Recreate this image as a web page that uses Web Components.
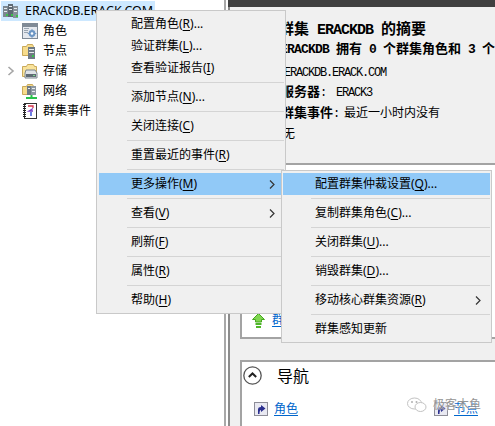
<!DOCTYPE html>
<html>
<head>
<meta charset="utf-8">
<title>群集</title>
<style>
  html, body { margin: 0; padding: 0; background: #fff; }
  body { font-family: "Noto Sans", "Noto Sans CJK SC", sans-serif; font-size: 12px; color: #000; }
  u { text-underline-offset: 2px; }
</style>
</head>
<body>

<cluster-app>
  <cluster-tree slot="tree">
    <tree-row root icon="cluster">ERACKDB.ERACK.COM</tree-row>
    <tree-row icon="roles">角色</tree-row>
    <tree-row icon="nodes">节点</tree-row>
    <tree-row icon="storage" expander>存储</tree-row>
    <tree-row icon="network">网络</tree-row>
    <tree-row icon="events">群集事件</tree-row>
  </cluster-tree>

  <cluster-summary slot="summary"></cluster-summary>

  <info-card slot="card">
    <link-row icon="up">群</link-row>
  </info-card>

  <nav-card slot="nav">
    <link-row icon="shortcut">角色</link-row>
    <link-row icon="shortcut">节点</link-row>
  </nav-card>

  <water-mark slot="over"></water-mark>

  <pop-menu slot="over" style="left:96px;top:10px;width:185px">
    <menu-item>配置角色(<u>R</u>)...</menu-item>
    <menu-item>验证群集(<u>L</u>)...</menu-item>
    <menu-item>查看验证报告(<u>I</u>)</menu-item>
    <menu-sep></menu-sep>
    <menu-item>添加节点(<u>N</u>)...</menu-item>
    <menu-sep></menu-sep>
    <menu-item>关闭连接(<u>C</u>)</menu-item>
    <menu-sep></menu-sep>
    <menu-item>重置最近的事件(<u>R</u>)</menu-item>
    <menu-sep></menu-sep>
    <menu-item hot arrow>更多操作(<u>M</u>)</menu-item>
    <menu-sep></menu-sep>
    <menu-item arrow>查看(<u>V</u>)</menu-item>
    <menu-sep></menu-sep>
    <menu-item>刷新(<u>F</u>)</menu-item>
    <menu-sep></menu-sep>
    <menu-item>属性(<u>R</u>)</menu-item>
    <menu-sep></menu-sep>
    <menu-item>帮助(<u>H</u>)</menu-item>
  </pop-menu>

  <pop-menu slot="over" class="sub" style="left:281px;top:170px;width:207px;padding-left:1px">
    <menu-item hot>配置群集仲裁设置(<u>Q</u>)...</menu-item>
    <menu-sep></menu-sep>
    <menu-item>复制群集角色(<u>C</u>)...</menu-item>
    <menu-sep></menu-sep>
    <menu-item>关闭群集(<u>U</u>)...</menu-item>
    <menu-sep></menu-sep>
    <menu-item>销毁群集(<u>D</u>)...</menu-item>
    <menu-sep></menu-sep>
    <menu-item arrow>移动核心群集资源(<u>R</u>)</menu-item>
    <menu-sep></menu-sep>
    <menu-item>群集感知更新</menu-item>
  </pop-menu>
</cluster-app>

<script>
const ICONS = {
  cluster: `
    <rect x="0" y="3" width="5" height="11" fill="#7d8790"/><rect x="1" y="5" width="3" height="1" fill="#e8ecef"/><rect x="1" y="8" width="3" height="1" fill="#e8ecef"/>
    <rect x="5" y="1" width="5" height="13" fill="#5f6a74"/><rect x="6" y="3" width="3" height="1" fill="#e8ecef"/><rect x="6" y="6" width="3" height="1" fill="#e8ecef"/>
    <rect x="10" y="3" width="5" height="12" fill="#87919a"/><rect x="11" y="5" width="3" height="1" fill="#e8ecef"/><rect x="11" y="8" width="3" height="1" fill="#e8ecef"/>
    <rect x="3" y="11" width="2" height="2" fill="#39c24a"/><rect x="8" y="11" width="2" height="2" fill="#39c24a"/><rect x="13" y="12" width="2" height="2" fill="#39c24a"/>`,
  roles: `
    <rect x="0.5" y="0.5" width="15" height="15" fill="#e4e8ee" stroke="#7f8a96"/>
    <rect x="1" y="1" width="14" height="3" fill="#7f8a96"/>
    <rect x="2" y="5" width="5" height="1" fill="#9aa5b1"/><rect x="2" y="7" width="4" height="1" fill="#9aa5b1"/><rect x="2" y="9" width="4" height="1" fill="#9aa5b1"/>
    <circle cx="10" cy="10.5" r="3.4" fill="#6d96c4"/><circle cx="10" cy="10.5" r="1.3" fill="#fff"/>
    <path d="M10 6.2v1.4M10 13.4v1.4M5.700 10.5h1.4M12.900 10.5h1.4" stroke="#6d96c4" stroke-width="1.2"/>`,
  nodes: `
    <path d="M0.500 3.500h4l1-2h5l1 2v9h-11z" fill="#f7dc8c" stroke="#c9a95a"/>
    <rect x="6" y="4" width="7" height="12" fill="#6f7a84"/>
    <rect x="7" y="6" width="5" height="1" fill="#e8ecef"/><rect x="7" y="9" width="5" height="1" fill="#e8ecef"/>
    <rect x="10" y="12" width="2" height="2" fill="#39c24a"/>`,
  storage: `
    <path d="M0.500 3.500h4l1-2h6l1 2h2v10h-14z" fill="#f9e39b" stroke="#c9a95a"/>
    <path d="M4 7h9l2 3v5h-12v-5z" fill="#dfe3e7" stroke="#7c868f"/>
    <rect x="4" y="11" width="10" height="3" fill="#5f6a74"/><rect x="11" y="12" width="2" height="1" fill="#7bd88a"/>`,
  network: `
    <path d="M0.500 3.500h4l1-2h5l1 2v8h-11z" fill="#f7dc8c" stroke="#c9a95a"/>
    <rect x="5" y="3" width="4" height="9" fill="#6f7a84"/><rect x="9" y="3" width="5" height="9" fill="#8d98a2"/>
    <rect x="6" y="5" width="2" height="1" fill="#e8ecef"/><rect x="10" y="5" width="3" height="1" fill="#e8ecef"/><rect x="10" y="8" width="3" height="1" fill="#e8ecef"/>
    <path d="M9.500 12v2M4 15h11" stroke="#28c24a" stroke-width="2"/>`,
  events: `
    <rect x="2.500" y="0.500" width="12" height="15" fill="#fff" stroke="#333"/>
    <path d="M1 1.500h3M1 3.500h3M1 5.500h3M1 7.500h3M1 9.500h3M1 11.500h3M1 13.500h3" stroke="#222"/>
    <path d="M6 3h5v2" fill="none" stroke="#d8344a" stroke-width="1.3"/>
    <path d="M11 5.500L7 8h4" fill="none" stroke="#7a3fc4" stroke-width="1.3"/>
    <path d="M9 9v4" stroke="#3a55d8" stroke-width="1.5"/>`,
  up: `
    <path d="M7.500 0.500L13.500 6.500H10.500V9H4.500V6.500H1.500z" fill="#7fd650" stroke="#46a81f"/>
    <rect x="4.500" y="10" width="6" height="2" fill="#4fb62a"/><rect x="5" y="13" width="5" height="2" fill="#4fb62a"/>`,
  shortcut: `
    <rect x="0.500" y="0.500" width="13" height="13" fill="#e9e9f2" stroke="#8d8d98"/>
    <path d="M4 12V7.500C4 5.800 5.200 5 7 5V3l4.500 3.500L7 10V8C6 8 5.500 9.500 5.500 12z" fill="#2b2f8f"/>`
};

const appTemplate = document.createElement("template");
appTemplate.innerHTML = `
  <style>
    :host { display: block; position: relative; width: 495px; height: 426px; overflow: hidden; background: #fff; }
    .split { display: flex; height: 100%; }
    .left { width: 224px; flex: none; border-right: 2px solid #a8a8a8; margin-right: 2px; }
    .right { flex: 1; min-width: 0; display: flex; flex-direction: column; background: #f0f0f0; border-left: 2px solid #8c8c8c; }
    .bar { height: 7px; flex: none; background: #404040; margin-left: -2px; }
    .stack { display: flex; flex-direction: column; flex: 1; min-height: 0; }
  </style>
  <div class="split">
    <div class="left"><slot name="tree"></slot></div>
    <div class="right">
      <div class="bar"></div>
      <div class="stack">
        <slot name="summary"></slot>
        <slot name="card"></slot>
        <slot name="nav"></slot>
      </div>
    </div>
  </div>
  <slot name="over"></slot>
`;
class ClusterApp extends HTMLElement {
  constructor() {
    super();
    this.attachShadow( {mode:"open"} );
    this.shadowRoot.appendChild( appTemplate.content.cloneNode(true) );
  }
}

const treeTemplate = document.createElement("template");
treeTemplate.innerHTML = `
  <style>
    :host { display: flex; flex-direction: column; align-items: flex-start; padding-top: 1px; }
  </style>
  <slot></slot>
`;
class ClusterTree extends HTMLElement {
  constructor() {
    super();
    this.attachShadow( {mode:"open"} );
    this.shadowRoot.appendChild( treeTemplate.content.cloneNode(true) );
  }
}

const iconSvg = (name, size=16) =>
  `<svg width="${size}" height="${size}" viewBox="0 0 ${size} ${size}" style="display:block;flex:none">${ICONS[name]}</svg>`;

const rowTemplate = document.createElement("template");
rowTemplate.innerHTML = `
  <style>
    :host { display: flex; align-items: center; height: 20px; padding-left: 22px; line-height: 20px; white-space: nowrap; position: relative; }
    :host([root]) { padding-left: 2px; margin-left: 1px; background: #cde8ff; width: 152px; font-size: 12.500px; }
    #icon { margin-right: 5px; }
    :host([root]) #icon { margin-right: 6px; }
    #chev { display: none; position: absolute; left: 7px; top: 5px; }
    :host([expander]) #chev { display: block; }
  </style>
  <svg id="chev" width="8" height="10" viewBox="0 0 8 10"><path d="M1.500 1L6 5 1.500 9" fill="none" stroke="#a6a6a6" stroke-width="1.600"/></svg>
  <span id="icon"></span><slot></slot>
`;
class TreeRow extends HTMLElement {
  constructor() {
    super();
    this.attachShadow( {mode:"open"} );
    this.shadowRoot.appendChild( rowTemplate.content.cloneNode(true) );
    this.shadowRoot.querySelector("#icon").innerHTML = iconSvg( this.getAttribute("icon") );
  }
}

const summaryTemplate = document.createElement("template");
summaryTemplate.innerHTML = `
  <style>
    :host { display: block; height: 156px; flex: none; box-sizing: border-box; padding: 11px 0 0 50px; overflow: hidden; font-family: "Noto Sans CJK SC", sans-serif; }
    div { height: 20px; line-height: 20px; white-space: pre; }
    .m { font-family: "Liberation Mono", monospace; }
    .h { font-size: 15px; font-weight: 700; margin-left: -1px; }
    .h .m { font-size: 15px; letter-spacing: -1px; }
    .b { font-size: 13px; font-weight: 700; }
    .b .m { font-size: 13px; letter-spacing: -0.8px; }
    .t { font-size: 12px; }
    .t .m { letter-spacing: -1.2px; font-weight: 400; }
    .k { font-size: 13px; font-weight: 700; }
    .sp { margin-top: 3px; margin-left: 4px; }
    .r4 { margin-left: 1px; }
    .r5 { margin-top: 1px; margin-left: 1px; }
    .r6 { margin-top: 1px; margin-left: 3px; }
    .pad { margin-left: 4px; }
    .pad5 { margin-left: 5px; }
  </style>
  <div class="h">群集<span class="m"> ERACKDB </span>的摘要</div>
  <div class="b"><span class="m">ERACKDB </span>拥有<span class="m"> 0 </span>个群集角色和<span class="m"> 3 </span>个</div>
  <div class="t sp"><span class="m">ERACKDB.ERACK.COM</span></div>
  <div class="t r4"><span class="k">服务器</span><span class="m">: </span><span class="m pad">ERACK3</span></div>
  <div class="t r5"><span class="k">群集事件</span><span class="m">:</span><span class="pad5">最近一小时内没有</span></div>
  <div class="t r6">无</div>
`;
class ClusterSummary extends HTMLElement {
  constructor() {
    super();
    this.attachShadow( {mode:"open"} );
    this.shadowRoot.appendChild( summaryTemplate.content.cloneNode(true) );
  }
}

const cardTemplate = document.createElement("template");
cardTemplate.innerHTML = `
  <style>
    :host { display: block; height: 176px; flex: none; box-sizing: border-box; margin-left: 10px; margin-bottom: 21px; background: #fff; border: 2px solid #a3a3a3; border-right: 0; padding-top: 147px; padding-left: 9px; }
  </style>
  <slot></slot>
`;
class InfoCard extends HTMLElement {
  constructor() {
    super();
    this.attachShadow( {mode:"open"} );
    this.shadowRoot.appendChild( cardTemplate.content.cloneNode(true) );
  }
}

const navTemplate = document.createElement("template");
navTemplate.innerHTML = `
  <style>
    :host { display: block; flex: 1; min-height: 0; box-sizing: border-box; margin-left: 10px; background: #fff; border: solid #a3a3a3; border-width: 2px 0 0 2px; padding: 3px 0 0 1px; }
    .head { display: flex; align-items: center; height: 20px; }
    .round { width: 19px; height: 19px; flex: none; }
    h2 { margin: 0 0 0 15px; font: 400 16px/20px "Noto Sans CJK SC", sans-serif; }
    .links { display: grid; grid-template-columns: 180px 1fr; margin: 16px 0 0 11px; }
  </style>
  <div class="head">
    <svg class="round" viewBox="0 0 19 19"><circle cx="9.500" cy="9.500" r="8.700" fill="#fff" stroke="#555" stroke-width="1.300"/><path d="M5.800 11L9.500 7.500 13.200 11" fill="none" stroke="#222" stroke-width="2"/></svg>
    <h2>导航</h2>
  </div>
  <div class="links"><slot></slot></div>
`;
class NavCard extends HTMLElement {
  constructor() {
    super();
    this.attachShadow( {mode:"open"} );
    this.shadowRoot.appendChild( navTemplate.content.cloneNode(true) );
  }
}

const linkTemplate = document.createElement("template");
linkTemplate.innerHTML = `
  <style>
    :host { display: flex; align-items: center; height: 16px; color: #0066cc; line-height: 16px; }
    #icon { margin-right: 6px; }
    a { color: inherit; text-decoration: underline; text-underline-offset: 2px; }
  </style>
  <span id="icon"></span><a><slot></slot></a>
`;
class LinkRow extends HTMLElement {
  constructor() {
    super();
    this.attachShadow( {mode:"open"} );
    this.shadowRoot.appendChild( linkTemplate.content.cloneNode(true) );
    this.shadowRoot.querySelector("#icon").innerHTML = iconSvg( this.getAttribute("icon"), this.getAttribute("icon")=="up" ? 15 : 14 );
  }
}

const menuTemplate = document.createElement("template");
menuTemplate.innerHTML = `
  <style>
    :host { display: flex; flex-direction: column; position: absolute; background: #f0f0f0; border: 1px solid #c9c9c9; padding: 2px 1px 2px 2px; box-sizing: content-box; }
  </style>
  <slot></slot>
`;
class PopMenu extends HTMLElement {
  constructor() {
    super();
    this.attachShadow( {mode:"open"} );
    this.shadowRoot.appendChild( menuTemplate.content.cloneNode(true) );
  }
}

const itemTemplate = document.createElement("template");
itemTemplate.innerHTML = `
  <style>
    :host { display: flex; align-items: center; justify-content: space-between; height: 22px; padding: 0 9px 0 32px; line-height: 22px; white-space: nowrap; }
    :host([hot]) { background: #91c9f7; }
    svg { display: none; }
    :host([arrow]) svg { display: block; }
  </style>
  <span><slot></slot></span>
  <svg width="6" height="9" viewBox="0 0 6 9"><path d="M1 0.500L5 4.500 1 8.500" fill="none" stroke="#333" stroke-width="1.200"/></svg>
`;
class MenuItem extends HTMLElement {
  constructor() {
    super();
    this.attachShadow( {mode:"open"} );
    this.shadowRoot.appendChild( itemTemplate.content.cloneNode(true) );
  }
}

const sepTemplate = document.createElement("template");
sepTemplate.innerHTML = `
  <style>
    :host { display: block; height: 7px; padding: 3px 0 3px 28px; box-sizing: border-box; }
    div { height: 1px; background: #d4d4d4; }
  </style>
  <div></div>
`;
class MenuSep extends HTMLElement {
  constructor() {
    super();
    this.attachShadow( {mode:"open"} );
    this.shadowRoot.appendChild( sepTemplate.content.cloneNode(true) );
  }
}

const markTemplate = document.createElement("template");
markTemplate.innerHTML = `
  <style>
    :host { display: flex; align-items: center; gap: 6px; position: absolute; left: 407px; top: 396px; height: 18px; color: #8a8a8a; text-shadow: 0 0 2px #fff, 0 0 1px #fff; line-height: 18px; white-space: nowrap; opacity: .9; }
  </style>
  <svg width="20" height="16" viewBox="0 0 20 16">
    <ellipse cx="7.500" cy="6.500" rx="7" ry="5.500" fill="#fff" stroke="#bcbcbc"/>
    <ellipse cx="13.500" cy="10" rx="5.500" ry="4.500" fill="#fff" stroke="#bcbcbc"/>
    <circle cx="5" cy="5" r="1" fill="#aaa"/><circle cx="9.500" cy="5" r="1" fill="#aaa"/>
  </svg>
  <span>极客木鱼</span>
`;
class WaterMark extends HTMLElement {
  constructor() {
    super();
    this.attachShadow( {mode:"open"} );
    this.shadowRoot.appendChild( markTemplate.content.cloneNode(true) );
  }
}

window.customElements.define( "cluster-app", ClusterApp );
window.customElements.define( "cluster-tree", ClusterTree );
window.customElements.define( "tree-row", TreeRow );
window.customElements.define( "cluster-summary", ClusterSummary );
window.customElements.define( "info-card", InfoCard );
window.customElements.define( "nav-card", NavCard );
window.customElements.define( "link-row", LinkRow );
window.customElements.define( "pop-menu", PopMenu );
window.customElements.define( "menu-item", MenuItem );
window.customElements.define( "menu-sep", MenuSep );
window.customElements.define( "water-mark", WaterMark );
</script>
</body>
</html>
